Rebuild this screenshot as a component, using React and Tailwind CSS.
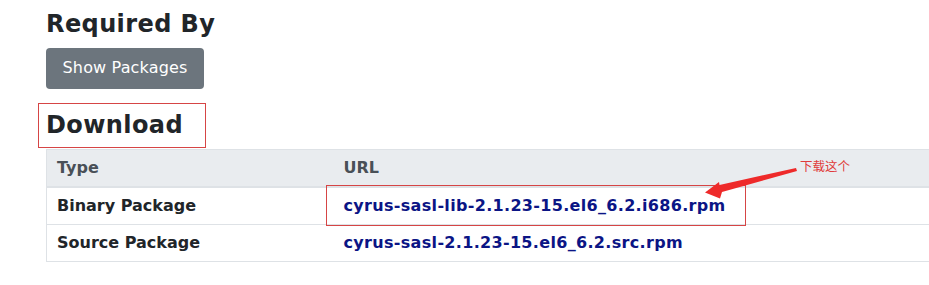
export default function App() {
  const font = { fontFamily: '"DejaVu Sans", Verdana, sans-serif' };
  return (
    <div className="relative w-[929px] h-[285px] overflow-hidden bg-white text-[#212529]" style={font}>
      <div className="pl-[46px] pt-[10px]">
        <h3 className="text-[24px] font-bold leading-[1.2] tracking-[0.4px] text-[#212529]">Required By</h3>
        <button className="mt-[9px] h-[41px] w-[158px] rounded-[4px] bg-[#6c757d] text-[16px] leading-6 tracking-[0.15px] text-white">
          Show Packages
        </button>
        <h3 className="mt-[22px] text-[24px] font-bold leading-[1.2] tracking-[0.4px] text-[#212529]">Download</h3>
        <table className="mt-[9px] w-[920px] border-collapse border border-[#dee2e6] text-[16px] font-bold leading-6">
          <thead>
            <tr className="bg-[#e9ecef] text-[#495057]">
              <th className="w-[287px] border-b-2 border-[#dee2e6] px-[10px] py-[6px] text-left">Type</th>
              <th className="border-b-2 border-[#dee2e6] px-[10px] py-[6px] text-left">URL</th>
            </tr>
          </thead>
          <tbody>
            <tr className="border-b border-[#dee2e6]">
              <td className="px-[10px] py-[6px]">Binary Package</td>
              <td className="px-[10px] py-[6px]">
                <a className="tracking-[0.32px] text-[#0b1585]">cyrus-sasl-lib-2.1.23-15.el6_6.2.i686.rpm</a>
              </td>
            </tr>
            <tr className="border-b border-[#dee2e6]">
              <td className="px-[10px] py-[6px]">Source Package</td>
              <td className="px-[10px] py-[6px]">
                <a className="tracking-[0.32px] text-[#0b1585]">cyrus-sasl-2.1.23-15.el6_6.2.src.rpm</a>
              </td>
            </tr>
          </tbody>
        </table>
      </div>

      {/* annotations */}
      <div className="absolute left-[38px] top-[103px] h-[45px] w-[168px] border border-[#d64545]" />
      <div className="absolute left-[326px] top-[185px] h-[41px] w-[420px] border border-[#d64545]" />
      <svg className="pointer-events-none absolute left-0 top-0" width="929" height="285">
        <polygon
          points="705,192.5 719,182 719.5,185 796,168 797,171 722,192 720,198.5"
          fill="#ee2a2a"
        />
      </svg>
      <div
        className="absolute left-[800px] top-[158px] text-[12.5px] leading-[16px] text-[#e03c3c]"
        style={{ fontFamily: '"Noto Sans CJK SC", sans-serif' }}
      >
        下载这个
      </div>
    </div>
  );
}
